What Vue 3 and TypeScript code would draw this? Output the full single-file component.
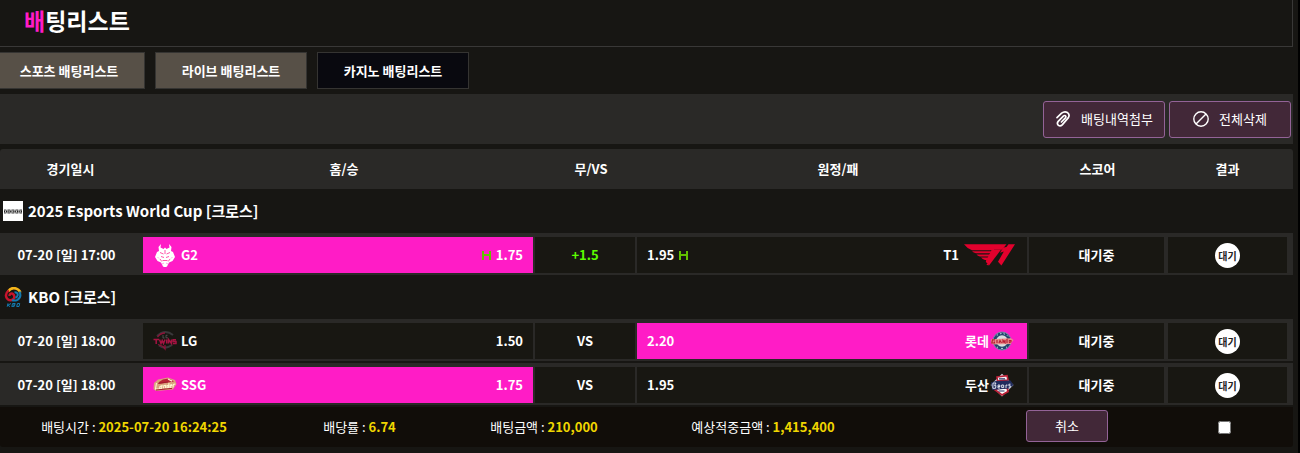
<script setup lang="ts">
import { ref } from 'vue'

interface Side {
  name: string
  logo: string
  odds: string
  picked?: boolean
  handicap?: boolean
}
interface Match {
  time: string
  home: Side
  line: string
  away: Side
}
interface League {
  name: string
  logo: string
  matches: Match[]
}

const tabs = ['스포츠 배팅리스트', '라이브 배팅리스트', '카지노 배팅리스트']
const activeTab = ref(2)
const selected = ref(false)

const headers = ['경기일시', '홈/승', '무/VS', '원정/패', '스코어', '결과']

const leagues: League[] = [
  {
    name: '2025 Esports World Cup [크로스]',
    logo: 'ewc',
    matches: [
      {
        time: '07-20 [일] 17:00',
        home: { name: 'G2', logo: 'g2', odds: '1.75', picked: true, handicap: true },
        line: '+1.5',
        away: { name: 'T1', logo: 't1', odds: '1.95', handicap: true },
      },
    ],
  },
  {
    name: 'KBO [크로스]',
    logo: 'kbo',
    matches: [
      {
        time: '07-20 [일] 18:00',
        home: { name: 'LG', logo: 'lg', odds: '1.50' },
        line: 'VS',
        away: { name: '롯데', logo: 'lotte', odds: '2.20', picked: true },
      },
      {
        time: '07-20 [일] 18:00',
        home: { name: 'SSG', logo: 'ssg', odds: '1.75', picked: true },
        line: 'VS',
        away: { name: '두산', logo: 'doosan', odds: '1.95' },
      },
    ],
  },
]

const summary = [
  { label: '배팅시간', value: '2025-07-20 16:24:25' },
  { label: '배당률', value: '6.74' },
  { label: '배팅금액', value: '210,000' },
  { label: '예상적중금액', value: '1,415,400' },
]
</script>

<template>
  <main class="page">
    <header class="title-bar">
      <h1><span class="accent">배</span>팅리스트</h1>
    </header>

    <nav class="tabs">
      <button
        v-for="(tab, i) in tabs"
        :key="tab"
        type="button"
        class="tab"
        :class="{ active: i === activeTab }"
        @click="activeTab = i"
      >{{ tab }}</button>
    </nav>

    <div class="toolbar">
      <button type="button" class="action">
        <svg width="16" height="18" viewBox="0 0 16 18" fill="none" stroke="#fff" stroke-width="1.7" stroke-linecap="round" stroke-linejoin="round">
          <path d="M2 7.6 6.6 3.2Q9.4.9 12.3 2.4 15.2 4.6 13.4 7.6L7.2 14.9Q5.2 16.8 3.2 15.2 1.6 13.4 3.2 11.4L8.6 5.9Q10 5 10.7 6.1 11.2 7.1 10.2 8.2L6.4 12" />
        </svg>
        <span>배팅내역첨부</span>
      </button>
      <button type="button" class="action">
        <svg width="16" height="16" viewBox="0 0 16 16" fill="none" stroke="#fff" stroke-width="1.4">
          <circle cx="8" cy="8" r="7.2" />
          <path d="M3 13 13 3" />
        </svg>
        <span>전체삭제</span>
      </button>
    </div>

    <table class="bets">
      <thead>
        <tr class="grid head">
          <th v-for="h in headers" :key="h" scope="col">{{ h }}</th>
        </tr>
      </thead>
      <tbody v-for="league in leagues" :key="league.name">
        <tr class="league">
          <th colspan="6" scope="colgroup">
            <svg v-if="league.logo === 'ewc'" width="20" height="20" viewBox="0 0 20 20">
              <path fill="#fff" d="M0 0h20v20H0z" />
              <path d="M1 9h18M1 12h18" stroke="#444" stroke-width="1" stroke-dasharray="2 .6 1 .4" />
              <path d="M1 10.5h18" stroke="#222" stroke-width="2" stroke-dasharray="1 .8 1.4 .5" />
            </svg>
            <svg v-else width="20" height="20" viewBox="0 0 20 20" fill="none">
              <path d="M5 4.5Q9-1 15 2.5 17 4 17.3 5.5" stroke="#f5b51b" stroke-width="2.6" />
              <path d="M5.8 3.4Q1.2 7 4 11.5 7 15 10.5 12 12.5 9 9.7 6.7 6.4 6 6.5 9" stroke="#c8142d" stroke-width="2.4" />
              <path d="M16.5 4.5Q19 10 14.5 12.8 11.5 14.2 9 13M11.5 5.3Q15 5.2 14.7 8.3 14 10.5 12.3 10.8" stroke="#147bb1" stroke-width="2" />
              <path d="M5 16.3 4.2 19.7M8 16.5 4.8 18.2 7 19.6M9.6 16.5h2.6l-.5 1.5-1.4.1 1.4.1-.6 1.4H8.8zM14.5 16.5h2.2l-.7 3h-2.3z" stroke="#147bb1" stroke-width="1" />
            </svg>
            <span>{{ league.name }}</span>
          </th>
        </tr>
        <tr v-for="m in league.matches" :key="m.home.name" class="grid match">
          <td class="time">{{ m.time }}</td>
          <td class="side home" :class="{ picked: m.home.picked }">
            <svg v-if="m.home.logo === 'g2'" width="24" height="24" viewBox="0 0 24 24">
              <path fill="#fff" d="M8 1 7.5 4.5 10.5 6 12 4.5 13.5 6 16.5 4.5 16 1 18.5 4 18 8 20 9 22 14 19.5 18 16 19.5 14 23.5 12 24.5 10 23.5 8 19.5 4.5 18 2 14 4 9 6 8 5.5 4z" />
              <path d="M7 9.5 10.5 11M17 9.5 13.5 11M8 13.5l3 1M16 13.5l-3 1M9.5 17.5h5M7 16l1.8 2.5M17 16l-1.8 2.5M12 7v4" fill="none" stroke="#f5a" stroke-width="1" />
              <path d="m9 21 2-1M15 21l-2-1M4.5 14 6 15.5M19.5 14 18 15.5" fill="none" stroke="#ff8bdc" stroke-width=".8" />
            </svg>
            <svg v-else-if="m.home.logo === 'lg'" width="24" height="24" viewBox="0 0 24 24" fill="none">
              <path d="M4 7Q12-.5 20 6M6 16.5Q12 21 19 16" stroke="#39383a" stroke-width="2" />
              <path d="M4.5 8Q8 3.8 12 4M5 15.5 10 17.5 12 20V16" stroke="#8d1238" stroke-width="1.3" />
              <path d="M10 6v3h1.5M14.5 6.3H13v2.5h1.8" stroke="#5c5b5d" stroke-width=".8" />
              <path d="M.5 10.5H6M3.2 10.5V15M6.5 10.5 8 14.5 9.2 11.5 10.5 14.5 12 10.5M13.7 10.5v4M15.5 14.5v-4L18.5 14.5v-4M23 10.7h-2.8v1.7H23v2h-3" stroke="#a61342" stroke-width="1.5" />
            </svg>
            <svg v-else width="24" height="24" viewBox="0 0 24 24" fill="none">
              <path d="M1 10 5 6.5 15 4.5 22 7 23.5 11 20 16.5 3 18 .5 16z" fill="#d9a27c" />
              <path d="M6 9Q11 4.5 17 6L21 8.5 6 11z" fill="#ba2538" />
              <path d="M15 6 19 8.2" stroke="#fff0d2" stroke-width="1.4" />
              <path d="M3.5 10 2.5 16H6M7 13.5l2-.8-.4 2.8-2 .2zM10.5 15.3l.4-2.8 1.8-.2-.3 2.8M16 10l-.6 4.7-1.5.2.2-2.2 1.5-.3M17 13.3l1.8-.8-.4-.8-1.3.5-.2 2.2 1.8-.2M20 14.5l.3-3 2-.5" stroke="#fff4d2" stroke-width="1.1" />
              <path d="M3 17 19 15.4M5 10.3 15 9" stroke="#a3192f" stroke-width="1" />
            </svg>
            <span class="team">{{ m.home.name }}</span>
            <svg v-if="m.home.handicap" class="handicap" width="9" height="9" viewBox="0 0 9 9">
              <path fill="#62c200" d="M0 0h2v3h5V0h2v9H7V5H2v4H0z" />
            </svg>
            <span>{{ m.home.odds }}</span>
          </td>
          <td class="line" :class="{ plus: m.line !== 'VS' }">{{ m.line }}</td>
          <td class="side away" :class="{ picked: m.away.picked }">
            <span>{{ m.away.odds }}</span>
            <svg v-if="m.away.handicap" class="handicap" width="9" height="9" viewBox="0 0 9 9">
              <path fill="#62c200" d="M0 0h2v3h5V0h2v9H7V5H2v4H0z" />
            </svg>
            <span class="team">{{ m.away.name }}</span>
            <svg v-if="m.away.logo === 't1'" width="56" height="24" viewBox="0 0 56 24">
              <g fill="#e2012d">
                <path d="M5 1.3H47.5L43 6.8H35L27.5 22 30 22.2 26.8 18.4 32.5 7.2H13Q8 5.5 5 1.3z" />
                <path d="M13 8.2H33L32 10.3H17Q14.5 9.8 13 8.2zM17.5 11.5H31.4L30.4 13.5H21Q18.6 13 17.5 11.5zM22 14.6H30L28.2 17H26Q23.5 16.6 22 14.6z" />
                <path d="M33.3 6.8H42L30 22.4 26.8 18.4z" />
                <path d="M49.5 1.3H56L42.4 22.4 39 18.8 44.8 8.5 41 9.8 44.4 4.6 47.4 3.9z" />
              </g>
            </svg>
            <svg v-else-if="m.away.logo === 'lotte'" width="26" height="24" viewBox="0 0 26 24" fill="none">
              <circle cx="13" cy="12" r="9" fill="#24446d" stroke="#6e91a8" stroke-width="1" />
              <circle cx="13" cy="12" r="5.8" fill="#d9dfe0" />
              <path d="M7.8 6.5 9 5.6M11 4.8l1.5-.3M14.5 4.7l1.5.5M18 6.3l1 1M8 17.8l1 .8M12 19.4h2M17 18.6l1-.8" stroke="#b7d3da" stroke-width="1" />
              <path d="M2 10.2 22 9.2 24.5 11 21.5 15 4 15.5 1.8 14z" fill="#e78d8c" />
              <path d="M6 10.8H3.5L2.8 14H5.4v-1.5M8 11v3M10 14l1-2.5 1.5 2.5M14 14v-2.6l2 2.3v-2.6M18 9.8V14M20 13.6l2-.7v-1.4h-1.5l-.5 1" stroke="#b91f35" stroke-width="1.2" />
            </svg>
            <svg v-else width="26" height="24" viewBox="0 0 26 24" fill="none">
              <path d="M13 .8 24.5 12 13 23.5 1.5 12z" fill="#d7d9e5" />
              <path d="M8 4 18 2.6 19 7 8.5 8z" fill="#f2f2f6" stroke="#bb2037" stroke-width="1.6" />
              <path d="M5 16 18 14 19 18.5 13 22z" fill="#fff" stroke="#bb2037" stroke-width="1.8" />
              <path d="M2 9.4 7 8 21.5 7.5 24.5 12 20 15.5 3 17z" fill="#202c5d" />
              <path d="M4 10 3.8 15.3H6.5L7 12.7H5.5M5.5 12.5 7 10H4M9 13.5h2l-.3-1.5H9.1L9 15h2M14.5 12h-1.8v2.6h2V12M17 15v-3l1.5.2M21.5 11.2h-1.6v1.6h1.4v1.5h-1.6" stroke="#e1e5ef" stroke-width="1" />
              <path d="M10 5.8h6M9.5 18h6" stroke="#293764" stroke-width="1.2" />
            </svg>
          </td>
          <td class="score">대기중</td>
          <td class="result"><span class="badge">대기</span></td>
        </tr>
      </tbody>
    </table>

    <footer class="summary">
      <div v-for="s in summary" :key="s.label" class="item">{{ s.label }} : <strong>{{ s.value }}</strong></div>
      <button type="button" class="action cancel">취소</button>
      <input v-model="selected" type="checkbox" class="check" aria-label="선택">
    </footer>
  </main>
</template>

<style>
body {
  margin: 0;
  background: #171613;
}
</style>

<style scoped>
.page {
  position: relative;
  box-sizing: border-box;
  min-height: 100vh;
  padding-right: 5px;
  border-right: 2px solid #000;
  overflow: hidden;
  background: #171613;
  color: #fff;
  font: 13px/20px "Noto Sans CJK KR", sans-serif;
}
.page::after {
  content: "";
  position: absolute;
  top: 350px;
  right: -2px;
  width: 2px;
  height: 10px;
  background: #22211f;
}
button {
  font: inherit;
  color: inherit;
  cursor: pointer;
}
svg {
  flex: none;
}
.title-bar {
  display: flex;
  align-items: center;
  box-sizing: border-box;
  height: 47px;
  padding: 0 24px 6px;
  border: solid #393837;
  border-width: 0 1px 1px 0;
}
h1 {
  margin: 0;
  font-size: 23px;
  line-height: 32px;
  font-weight: 700;
}
.accent {
  color: #ff1cc6;
}
.tabs {
  display: flex;
  gap: 10px;
  margin: 5px 0 5px -7px;
}
.tab {
  width: 152px;
  height: 37px;
  padding: 0;
  border: 1px solid #353432;
  background: #575047;
  font-weight: 700;
}
.tab.active {
  background: #09090f;
}
.toolbar {
  display: flex;
  justify-content: flex-end;
  align-items: center;
  gap: 4px;
  height: 50px;
  padding-right: 2px;
  background: #2a2927;
}
.action {
  display: flex;
  align-items: center;
  justify-content: center;
  gap: 10px;
  width: 122px;
  height: 37px;
  padding: 0;
  border: 1px solid #936397;
  border-radius: 3px;
  background: #422838;
}
.bets {
  display: block;
  margin-top: 5px;
  font-weight: 700;
}
.bets thead,
.bets tbody {
  display: block;
}
.grid {
  display: grid;
  grid-template-columns: 141px 1fr 100px 1fr 137px 119px;
  column-gap: 2px;
  padding-right: 6px;
  background: #2a2927;
}
.head {
  align-items: center;
  height: 40px;
  border-radius: 3px 3px 0 0;
}
th,
td {
  padding: 0;
}
.head th:nth-child(n + 2):nth-child(-n + 4) {
  padding-left: 12px;
}
.league {
  display: block;
}
.league th {
  display: flex;
  align-items: center;
  gap: 5px;
  height: 44px;
  padding-left: 3px;
  font-size: 15px;
}
.match {
  padding-top: 4px;
  padding-bottom: 2px;
}
.match + .match {
  margin-top: 2px;
}
.match td {
  display: flex;
  align-items: center;
  justify-content: center;
  height: 36px;
  background: #181712;
}
.match .time {
  padding-right: 8px;
  background: none;
}
.match .score {
  margin-right: 2px;
}
.match .home {
  padding: 0 10px;
}
.match .away {
  padding: 0 12px 0 10px;
}
.match .picked {
  background: #ff1cc6;
}
.home .team {
  margin: 0 auto 0 4px;
}
.away .team {
  margin-left: auto;
}
.home .handicap {
  margin-right: 5px;
}
.away .handicap {
  margin-left: 5px;
}
.match .plus {
  color: #5cff00;
}
.badge {
  width: 25px;
  border-radius: 50%;
  background: #fff;
  color: #222;
  font-size: 10px;
  line-height: 25px;
  text-align: center;
}
.summary {
  display: grid;
  grid-template-columns: 268fr 183fr 186fr 252fr 89fr 178px 137px;
  align-items: center;
  justify-items: center;
  height: 40px;
  margin-top: 2px;
  border-radius: 0 0 3px 3px;
  background: #110d09;
}
.summary strong {
  color: #f0d600;
}
.cancel {
  grid-column: 6;
  width: 82px;
  height: 32px;
  margin-bottom: 2px;
}
.check {
  width: 13px;
  height: 13px;
  margin: 0;
}
</style>
